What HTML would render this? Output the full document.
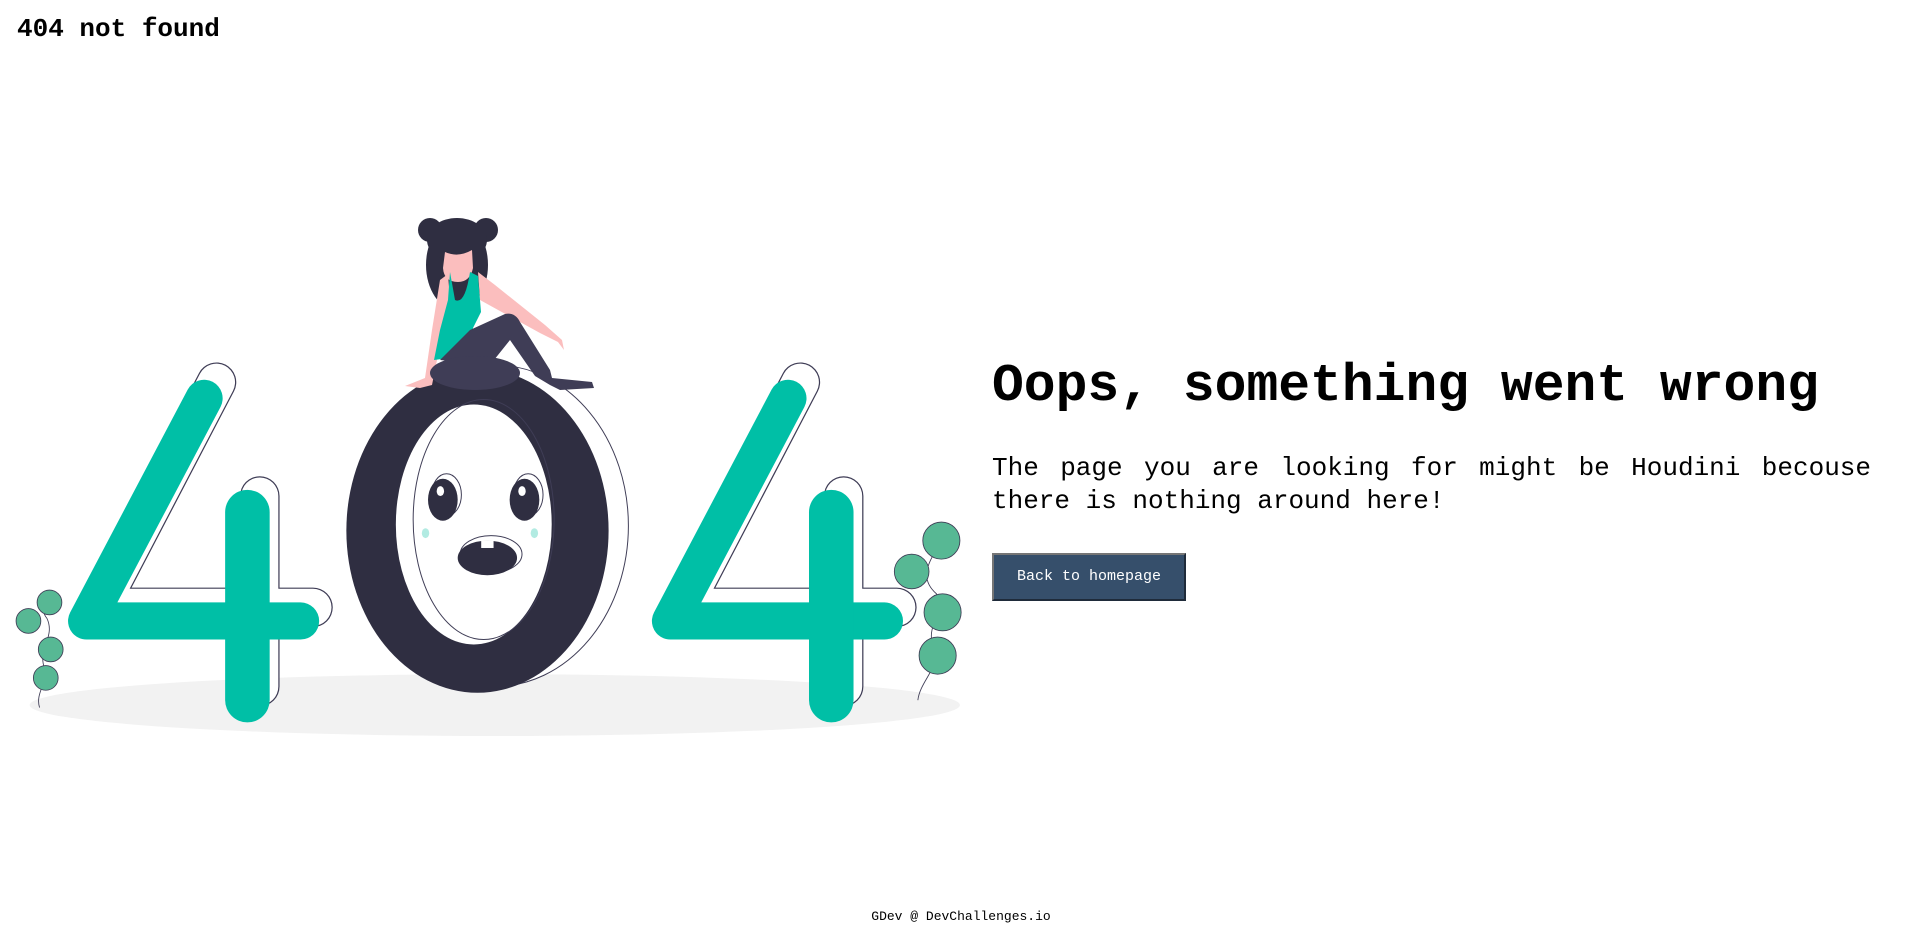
<!DOCTYPE html>
<html><head><meta charset="utf-8"><style>
html,body{margin:0;padding:0;background:#fff;width:1920px;height:944px;overflow:hidden;position:relative;font-family:"Liberation Mono",monospace;}
.t{position:absolute;left:17px;top:14px;font-size:26px;font-weight:bold;margin:0;color:#000;}
h2{position:absolute;left:992px;top:356px;margin:0;font-size:53px;font-weight:bold;color:#000;white-space:nowrap;}
p{position:absolute;left:992px;top:452px;width:898px;margin:0;font-size:26px;line-height:33px;text-align:justify;color:#000;width:879px;}
.b{position:absolute;left:992px;top:553px;width:194px;height:48px;box-sizing:border-box;background:#364f6b;border:2px solid;border-color:#767676 #1f2b3a #1f2b3a #767676;color:#fff;font-size:15px;line-height:44px;text-align:center;}
.f{position:absolute;left:-9px;width:1940px;text-align:center;top:909px;font-size:13px;color:#000;}
svg{position:absolute;left:0;top:0}
</style></head><body>
<div class="t">404 not found</div>
<svg width="1920" height="944" viewBox="0 0 1920 944">
<g transform="scale(1.237)">
<ellipse cx="400" cy="570" rx="376" ry="25" fill="#f2f2f2"/>
<g transform="translate(10,-11)" fill="none" stroke-linecap="round" stroke-linejoin="round">
<path d="M165,320 L70,502 L243,502 M200,412 L200,566" stroke="#3f3d56" stroke-width="32"/>
<path d="M165,320 L70,502 L243,502 M200,412 L200,566" stroke="#fff" stroke-width="30"/>
</g>
<g fill="none" stroke="#00bfa6" stroke-linecap="round" stroke-linejoin="round">
<path d="M165,322 L70,502 L243,502" stroke-width="30"/>
<path d="M200,414 L200,566" stroke-width="36"/>
</g>
<g transform="translate(482,-11)" fill="none" stroke-linecap="round" stroke-linejoin="round">
<path d="M165,320 L70,502 L243,502 M200,412 L200,566" stroke="#3f3d56" stroke-width="32"/>
<path d="M165,320 L70,502 L243,502 M200,412 L200,566" stroke="#fff" stroke-width="30"/>
</g>
<g transform="translate(472,0)" fill="none" stroke="#00bfa6" stroke-linecap="round" stroke-linejoin="round">
<path d="M165,322 L70,502 L243,502" stroke-width="30"/>
<path d="M200,414 L200,566" stroke-width="36"/>
</g>
<ellipse cx="400" cy="425" rx="108" ry="130" fill="#fff" stroke="#3f3d56" stroke-width="0.8"/>
<ellipse cx="386" cy="429" rx="106" ry="131" fill="#2f2e41"/>
<ellipse cx="383" cy="424" rx="63" ry="97" fill="#fff"/>
<ellipse cx="391" cy="420" rx="57" ry="97" fill="none" stroke="#3f3d56" stroke-width="0.8"/>
<ellipse cx="361" cy="400" rx="12" ry="17" fill="none" stroke="#3f3d56" stroke-width="0.8"/>
<ellipse cx="427" cy="400" rx="12" ry="17" fill="none" stroke="#3f3d56" stroke-width="0.8"/>
<ellipse cx="358" cy="404" rx="12" ry="17" fill="#2f2e41"/>
<ellipse cx="424" cy="404" rx="12" ry="17" fill="#2f2e41"/>
<ellipse cx="356" cy="397" rx="3" ry="4" fill="#fff"/>
<ellipse cx="422" cy="397" rx="3" ry="4" fill="#fff"/>
<ellipse cx="344" cy="431" rx="3" ry="4" fill="#b2ebe2"/>
<ellipse cx="432" cy="431" rx="3" ry="4" fill="#b2ebe2"/>
<ellipse cx="397" cy="448" rx="25" ry="15" fill="none" stroke="#3f3d56" stroke-width="0.8"/>
<ellipse cx="394" cy="451" rx="24" ry="14" fill="#2f2e41"/>
<rect x="389" y="437" width="10" height="6" fill="#fff"/>
<g fill="#57b894" stroke="#3f3d56" stroke-width="0.7">
<path d="M32,572 C28,560 40,550 36,540 C30,525 45,515 38,500 C30,490 42,485 40,480" fill="none"/>
<circle cx="40" cy="487" r="10"/><circle cx="23" cy="502" r="10"/><circle cx="41" cy="525" r="10"/><circle cx="37" cy="548" r="10"/>
<path d="M742,566 C744,550 760,540 755,525 C747,505 765,495 757,480 C740,465 755,450 760,438" fill="none"/>
<circle cx="761" cy="437" r="15"/><circle cx="737" cy="462" r="14"/><circle cx="762" cy="495" r="15"/><circle cx="758" cy="530" r="15"/>
</g>
</g>
<ellipse cx="457" cy="265" rx="31" ry="45" fill="#2f2e41"/>
<circle cx="430" cy="230" r="12" fill="#2f2e41"/>
<circle cx="486" cy="230" r="12" fill="#2f2e41"/>
<ellipse cx="457" cy="240" rx="30" ry="22" fill="#2f2e41"/>
<path d="M445,252 Q458,258 472,250 L473,268 Q470,282 458,282 Q444,282 443,268 Z" fill="#fbbebe"/>
<path d="M478,272 L495,285 L545,325 L562,340 L564,350 L558,342 L554,340 L540,333 L480,300 Z" fill="#fbbebe"/>
<path d="M448,274 L440,280 L432,330 L425,378 L415,382 L405,386 L420,388 L432,385 L437,360 L450,300 Z" fill="#fbbebe"/>
<path d="M450,272 L455,300 Q465,305 470,272 L478,276 L481,312 L473,328 L472,340 L465,356 L434,360 L440,330 L448,300 Z" fill="#00bfa6"/>
<path d="M440,360 L470,330 L505,314 Q515,312 520,322 L550,370 L552,378 L592,382 L594,388 L560,390 L550,385 L535,376 L510,340 L490,365 Z" fill="#3f3d56"/>
<ellipse cx="475" cy="373" rx="45" ry="17" fill="#3f3d56"/>
</svg>
<h2>Oops, something went wrong</h2>
<p>The page you are looking for might be Houdini becouse there is nothing around here!</p>
<div class="b">Back to homepage</div>
<div class="f">GDev @ DevChallenges.io</div>
</body></html>
